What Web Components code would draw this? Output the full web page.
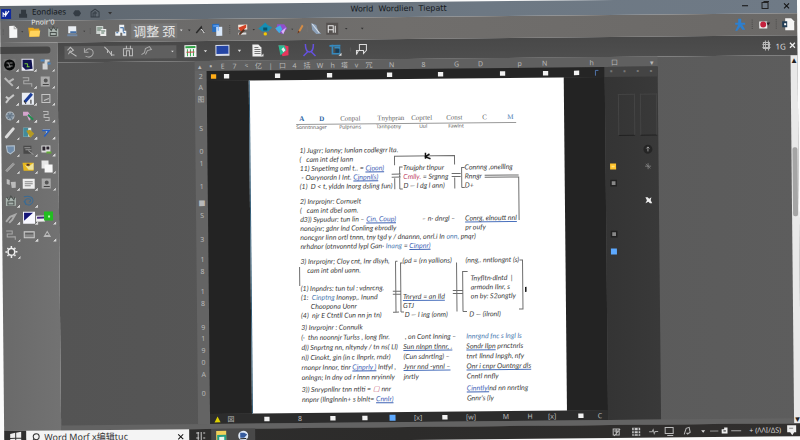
<!DOCTYPE html>
<html lang="en">
<head>
<meta charset="utf-8">
<title>World Wordlien Tiepatt</title>
<style>
html,body{margin:0;height:100%;overflow:hidden;background:#fbfbfb}
body{font-family:"Noto Sans","Noto Sans CJK SC",sans-serif}
</style>
</head>
<body>
<word-desktop></word-desktop>
<script>
const ICONS = {
  none:'',
  caret:'<path d="M4 5h4L6 7.500z" fill="#ddd"/>',
  dcaret:'<path d="M4 5h4L6 7.500z" fill="#333"/>',
  dots:'<path d="M6 0v12" stroke="#3c3c3c" stroke-dasharray="1 1.500"/>',
  sep:'<path d="M6 0v12" stroke="#777"/>',
  logo:'<path d="M1 1h10v10H1z" fill="#102a9c"/><path d="M3 9V5l2 2 1-4v4l3-4M5 9l1-3" stroke="#fff" fill="none"/>',
  save:'<path d="M4 2h5v4H4zM2 6h8v4H2z" fill="#323940"/>',
  cloud:'<path d="M2 6l2-3h4l2 3-2 3H4z" fill="#343c44"/>',
  home:'<path d="M2 10V5l4-3 4 3v5zM4 10V6h4M6 4v6" fill="none" stroke="#343c44"/>',
  doc:'<path d="M2 0h5l3 3v9H2z" fill="#f6f6f6"/><path d="M7 0v3h3" stroke="#aaa" fill="none"/>',
  folder:'<path d="M0 2h5l1 1h5v8H1z" fill="#e8a71c"/><path d="M2 5h10l-1 6H1z" fill="#ffd45d"/>',
  basket:'<path d="M1 3h10v8H1z" fill="#a9b3ae"/><path d="M2 2l2 3 2-4 3 4 1-3M3 7h6v3H3z" stroke="#4b514e" fill="none"/>',
  pc:'<path d="M2 1h8v7H2z" fill="#e8edf2"/><path d="M1 9h10v2H1z" fill="#7289a5"/><path d="M4 6h6v2H4z" fill="#436fa8"/>',
  copy:'<path d="M1 1h7v8H1z" fill="#ccd2cf"/><path d="M5 4h6v7H5z" fill="#eee"/><path d="M2 3h5M2 5h4M6 6h4M6 8h3" stroke="#52705e"/>',
  find:'<path d="M4 0h5v6h2v5H7V8H5v3H0V7h4z" fill="#eef2f6"/><path d="M5 3h3v4M1 8h2M8 8h2" stroke="#275b99" fill="none"/>',
  cut:'<path d="M2 9l5-6 1 4 2 1" stroke="#292929" stroke-width="1.500" fill="none"/><path d="M7 5l3 4" stroke="#eee"/>',
  pages:'<path d="M1 0h7v8H1z" fill="#276dbf"/><path d="M5 3h6v9H5z" fill="#d9e8fa"/><path d="M2 2h5v5" stroke="#72afff" fill="none"/>',
  paint:'<path d="M2 1h9v5H2z" fill="#f5e8dc"/><path d="M2 4l8-3v3L5 8z" fill="#d34224"/><path d="M2 9h8v2H2z" fill="#ddd"/><path d="M8 6l-5 5" stroke="#532" stroke-width="2"/>',
  clover:'<path d="M6-1l3 3 4 2-4 4H3L-1 5l4-3z" fill="#168eb3"/><path d="M4 4h4v3H4z" fill="#0b5268"/><circle cx="6" cy="10.500" r="1.700" fill="#f4c900"/>',
  gem:'<path d="M2 1h7l3 4-5 6-6-4z" fill="#8f50ca"/><path d="M0 5l5-3 2 4-3 4z" fill="#42aee4"/><path d="M6 8l5-4-3 7z" fill="#dbb5f7"/>',
  brush:'<path d="M9 0L5 7l-2 4 4-2 4-7z" fill="#d58c45"/><path d="M4 8l-1 4 3-2z" fill="#69351d"/>',
  feather:'<path d="M1 0l5 2 2 6 3 3H6L2 7z" fill="#8ca0b8"/><path d="M2 1l7 9" stroke="#d8e1e9"/>',
  ai:'<path d="M0 0h12v12H0z" fill="#565250"/><path d="M2 10V3h5v7M2 7h5M9 3v7" stroke="#eee" fill="none"/>',
  man:'<path d="M4 0h3v4h4v2H8l3 5H8L6 8l-3 4H1l3-6H1V4h3z" fill="#2d7fce"/>',
  rose:'<path d="M1 3h8v7H1z" fill="#eee"/><circle cx="5" cy="6" r="3" fill="#c4213d"/><path d="M8 4h4l-2 3z" fill="#30232a"/>',
  file2:'<path d="M3 0h6l3 3v9H3z" fill="#f5f5f5"/><path d="M0 3h5v6H0z" fill="#213c55"/><path d="M2 5h2v2H2z" fill="#fff"/>',
  min:'<path d="M3 6h6" stroke="#111"/>', max:'<path d="M3 3h6v6H3zM5 3V2h5" fill="none" stroke="#222"/>',
  close:'<path d="M4 4l5 5M9 4L4 9" stroke="#111"/>',
  wclose:'<path d="M3 3l6 6M9 3L3 9" stroke="#eee" stroke-width="1.500"/>',
  arr:'<path d="M1 4l3-3 3 3-3 2 6 4M2 8l2-4" stroke="#bbb" fill="none"/>',
  undo:'<path d="M1 2v4h4M2 5c3-5 10-1 7 4-2 3-5 2-7 1" stroke="#aaa" fill="none"/>',
  dist:'<path d="M1 1l4 4 3 4h3M4 7V3M8 5v5" stroke="#bbb" fill="none"/>',
  arch:'<path d="M1 10V3h9v7H7V5H4v5zM4 0v3h4V0" stroke="#bbb" fill="none"/>',
  link:'<path d="M1 9l3-2 1-4 4-2 2 3-4 1-2 4" stroke="#aaa" fill="none"/>',
  table:'<path d="M0 0h12v12H0z" fill="#f3f3f3"/><path d="M1 1h10v2H1z" fill="#2da345"/><path d="M3 4v7M6 4v7M9 4v7" stroke="#38a952"/><path d="M2 7h8" stroke="#c44"/>',
  screen:'<path d="M-1 0h14v11H-1z" fill="#d8ddea"/><path d="M0 1h12v8H0z" fill="#2445a5"/>',
  notes:'<path d="M1 0h6l3 3v9H1z" fill="#eee"/><path d="M3 3h4M3 5h6M3 7h6M3 9h6" stroke="#777"/><path d="M12 9v3H9z" fill="#ddd"/>',
  fan:'<path d="M1 1h6l4 1v9l-6 1z" fill="#e6365d"/><path d="M1 1l6 0 2 5-6 5z" fill="#28b993"/><path d="M4 5l2-2 2 3-2 2z" fill="#eee"/>',
  ucurve:'<path d="M2 0c0 5 1 8 4 8s4-3 4-8M0 12l4-4M12 12L8 8" stroke="#6551e0" stroke-width="1.500" fill="none"/>',
  crop:'<path d="M0 2h11M3 1v9h7V4H5" stroke="#3689bd" stroke-width="1.700" fill="none"/><path d="M6 5h4v4H6z" fill="#173d58"/><path d="M12 9v3H9z" fill="#ddd"/>',
  poly:'<path d="M4 1h7v6L8 10V7H3l-2 4V7h3z" stroke="#ddd" fill="none"/>',
  mesh:'<path d="M3 3h6v6H3zM5 1v10M8 1v10M2 5h8M2 8h8" stroke="#bbb" fill="none"/>',
  orb:'<path d="M0 0h12v12H0z" fill="#777"/><circle cx="6" cy="6" r="5.500" fill="#080909"/><path d="M3 4h2l1 3h3M3 8h4M6 4h3" stroke="#888" fill="none"/>',
  night:'<path d="M0 0h12v12H0z" fill="#e9eaf3"/><path d="M1 1h9l1 9-7 1-3-3z" fill="#101250"/><path d="M3 5h3M5 8h3M6 5v3" stroke="#71c83a"/>',
  stamp:'<path d="M5 1h5v2H8v8H3V5h2z" fill="#d1d3d5"/><path d="M1 2h4M8 5h3" stroke="#4c88c4" stroke-width="2"/>',
  twig:'<path d="M1 2l4 4 4 4M5 6l5-3" stroke="#b8b8b8" stroke-width="2" fill="none"/>',
  twig2:'<path d="M2 10l3-4 5-4M2 4l3 2" stroke="#c8c8c8" stroke-width="2" fill="none"/>',
  steps:'<path d="M1 2h6v3H2v3h8v3" stroke="#aaa" fill="none"/>',
  face:'<path d="M1 1h9v10H1z" fill="#aaa"/><circle cx="6" cy="5" r="2" fill="#555"/><path d="M3 9h6" stroke="#444"/>',
  pen:'<path d="M0 0h12v12H0z" fill="#e9edf4"/><path d="M3 9L10 1" stroke="#1b3d98" stroke-width="3"/><path d="M2 8l2 3M9 7v4" stroke="#222"/>',
  box:'<path d="M2 2h8v8H2zM4 8l5-2" stroke="#c5c5c5" fill="none"/>',
  globe:'<circle cx="6" cy="6" r="4" fill="#8b9baa" stroke="#b4bbc0"/><path d="M2 6h8M4 3l4 7M8 3L4 9" stroke="#647584"/>',
  pink:'<path d="M1 2h5l4 6-3 3-2-5H1z" fill="#d5a4cd"/><path d="M6 5l5 5" stroke="#238b4e" stroke-width="2"/>',
  node:'<path d="M3 2h5v3H4v3h5v3H5" stroke="#b8b8b8" fill="none"/>',
  stick:'<path d="M2 10L9 2" stroke="#ddd" stroke-width="3" stroke-linecap="round"/>',
  fill:'<path d="M1 1h8v9H1z" fill="#dde8ea"/><path d="M1 1h5v9H1z" fill="#438b9b"/><path d="M4 4l4-1 4 4-4 4z" fill="#b59a22"/>',
  shear:'<path d="M2 3h8L5 9l1-4z" fill="#d0e0f2"/><path d="M2 4h7L4 10" stroke="#245dc1" stroke-width="1.500" fill="none"/>',
  shield:'<path d="M2 2h8v5l-4 3-3-2z" fill="#708caa" stroke="#b4c2ce"/>',
  film:'<path d="M1 2h8v8H1z" fill="#494949"/><path d="M2 4h6M3 6h6M6 7l5 4" stroke="#999"/>',
  cards:'<path d="M1 2h9v7H1z" fill="#ddd"/><path d="M2 3h3v4H2zM6 3h3v3H6z" fill="#2b242e"/><path d="M6 8h5v2H6z" fill="#62aa37"/>',
  line:'<path d="M1 10L9 2M2 11l8-8" stroke="#aaa"/>',
  yellow:'<path d="M0 2h11v8H1z" fill="#e6b71d"/><path d="M2 4l4 2 5-4v7H6z" fill="#eee39c"/><path d="M4 4h3" stroke="#533" stroke-width="2"/>',
  sheets:'<path d="M1 0h7v8H1z" fill="#e7e7e7"/><path d="M4 4h8v8H4z" fill="#f8f8f8"/>',
  cups:'<path d="M2 1v5l3 1V2M6 4h5v6H7z" fill="#bbb"/>',
  list:'<path d="M0 1h12v10H0z" fill="#eee"/><path d="M2 4h8M2 6h8M2 8h6" stroke="#888"/>',
  swirl:'<path d="M1 2c9-2 12 5 6 8-5 2-7-6-2-6 4 0 3 4 1 3M1 6l2 4" stroke="#396b95" fill="none"/>',
  wand:'<path d="M1 10l4-5 5-2-3 5-3 3" stroke="#aaa" stroke-width="2" fill="none"/>',
  swatch:'<path d="M0 0h12v12H0z" fill="#f8f8ff"/><path d="M1 1h9L1 9z" fill="#141477"/>',
  green:'<path d="M-5 4h9v6H-5z" fill="#eee"/><path d="M-4 6h7" stroke="#40267c" stroke-width="2"/><path d="M3 0h9v9H3z" fill="#22bd21"/><path d="M7 4h2v2H7z" fill="#baffb0"/>',
  rect:'<path d="M1 3h10v6H1z" fill="#888" stroke="#ccc"/><path d="M2 5h8" stroke="#555"/>',
  tri:'<path d="M6 3L3 8h6zM4 7h4" fill="none" stroke="#b8b8b8"/>',
  gear:'<circle cx="6" cy="6" r="3.300" stroke="#eee" fill="#555" stroke-width="1.500"/><path d="M6 0v2M6 10v2M0 6h2M10 6h2M2 2l1 1M9 9l1 1M10 2L9 3M3 9l-1 1" stroke="#eee" stroke-width="1.500"/>',
  win:'<path d="M1 2l5-1v5H1zM7 1l5-1v6H7zM1 7h5v5H1zM7 7h5v5H7z" fill="#eee"/>',
  search:'<circle cx="7" cy="5" r="3" stroke="#333" fill="none"/><path d="M5 7l-3 4" stroke="#333"/>',
  task:'<path d="M2 3h3M2 8h3M7 2v8M9 3h2M9 8h2M4 2v8" stroke="#c9c9c9"/>',
  explorer:'<path d="M1 1h10v10H1z" fill="#f1d15a"/><path d="M2 5h9v6H2z" fill="#279e83"/><path d="M4 7h5v4H4z" fill="#e8f4ec"/>',
  browser:'<circle cx="6" cy="6" r="5" fill="#dfe9f6"/><path d="M3 3h4l3 2-3 3H3z" fill="#355b9e"/><path d="M3 9h6" stroke="#222"/>',
  tray:'<path d="M3 3h6v6H3zM4 5h5M6 3v6M4 10l6-7" stroke="#bbb" fill="none"/>',
  grid:'<path d="M2 2h8v8H2z" fill="#ccc"/><path d="M1 5h10M1 8h10M4 2v8M8 2v8" stroke="#333"/>',
  wave:'<path d="M2 6h3l1-2 1 4 1-2h3" stroke="#aaa" fill="none"/>',
  mon:'<path d="M2 2h8v6H2zM4 10h6" stroke="#bbb" fill="none"/>',
  bell:'<path d="M3 9l2-6 3-1 1 5-3 2M5 8h3" stroke="#bbb" fill="none"/>',
  minus:'<path d="M1 6h10" stroke="#aaa"/>',
  stack:'<path d="M3 4h3V2h4v7H3z" fill="#eee"/><path d="M5 5h3v2H5z" fill="#777"/>',
  chat:'<path d="M2 1h9v7H9l-2 3-2-3H2z" fill="#eee"/><path d="M4 4h4" stroke="#888"/>',
  white:'<path d="M3 3h7v6H3z" fill="#f2f2f2"/>', orange:'<path d="M3 3h7v6H3z" fill="#ffad18"/>', blue:'<path d="M2 2h8v8H2z" fill="#5da9ff"/>',
  gold:'<path d="M2 2h8v8H2z" fill="#ffc32e"/><path d="M4 5h4v2H4z" fill="#ffe27c"/>',
  gray:'<path d="M2 1h9v9H2z" fill="#222"/><path d="M4 3h5v5H4z" fill="#888"/>',
  pinb:'<circle cx="6" cy="6" r="6" fill="#252525"/><path d="M6 3v6M4 5l2-2 2 2" stroke="#bbb" fill="none"/>',
  star:'<path d="M6 2v8M2 6h8M3 3l6 6" stroke="#888"/>',
  puzzle:'<path d="M2 2h3l2 2 3-2-1 4 2 4H8L6 8l-4 2 2-4z" fill="#eee"/>',
  warn:'<path d="M6 2l4 8H2z" fill="#ddd000"/>',
  flag:'<path d="M5 10V3h4" stroke="#5d8cd4" fill="none"/>'
};
const define = (name, html, after) => {
  const t = document.createElement('template'); t.innerHTML = html;
  customElements.define(name, class extends HTMLElement {
    constructor(){ super(); this.attachShadow({mode:'open'}).append(t.content.cloneNode(true)); }
    connectedCallback(){ if(after && !this.ready){ this.ready = true; after(this, this.shadowRoot); } }
  });
};

define('ui-icon', `<style>:host{display:inline-flex;width:12px;height:12px}svg{width:100%;height:100%;overflow:visible}</style><svg viewBox="0 0 12 12" aria-hidden="true"></svg>`,
  (h,r)=>{ r.querySelector('svg').innerHTML = ICONS[h.getAttribute('name')] || ''; });

/* items="name:width …": every entry is a button centred in a cell of that width */
define('icon-strip', `<style>
:host{display:flex;align-items:center}
button{all:unset;display:flex;justify-content:center;align-items:center;flex:none;height:100%}
i{flex:none}
</style>`, (h,r)=>{
  for(const it of h.getAttribute('items').trim().split(/\s+/)){
    const [n,w] = it.split(':'), b = document.createElement(n==='none'?'i':'button');
    b.style.width=w+'px';
    if(n!=='none'){ b.type='button'; b.ariaLabel=n; b.innerHTML = `<ui-icon name="${n}"></ui-icon>`; }
    r.append(b);
  }
});

define('title-bar', `<style>
:host{display:grid;grid-template-columns:1fr auto 1fr;height:15px;align-items:center;background:linear-gradient(90deg,#5d656d,#6d7883 60%,#6f7a86);color:#15191d;font-size:8px;line-height:10px}
.l{display:flex;align-items:center}.l span{width:36px;padding-bottom:3px}h1{margin:0;padding-bottom:2px;font:8px/10px "DejaVu Sans",sans-serif;white-space:pre}
.r{justify-self:end;padding-bottom:2px}
</style><div class="l"><icon-strip items="logo:12 none:2 save:18"></icon-strip><span>Eondiaes</span><icon-strip items="cloud:18 home:18 dcaret:12"></icon-strip></div>
<h1>World  Wordlien  Tiepatt</h1><icon-strip class="r" items="min:20 max:20 close:22"></icon-strip>`);

define('main-toolbar', `<style>
:host{display:flex;align-items:center;height:22px;background:linear-gradient(90deg,#696969,#706e6c 50%,#6b6967);color:#eee}
.t{width:46px;height:15px;font:13px/15px "Noto Sans CJK SC",sans-serif;background:#777;text-align:center;color:#e5e5e5;white-space:nowrap}
.s{flex:1}
</style><icon-strip items="dots:6 doc:13 dcaret:6 folder:18 basket:19 pc:19 dcaret:6 dots:6 copy:16 none:2 find:20"></icon-strip>
<div class="t">调整 颈</div><icon-strip items="caret:8 dcaret:8 cut:14 none:2 pages:16 dots:9 paint:16 dcaret:7 clover:16 gem:16 dcaret:6 brush:9 sep:6 feather:12 ai:20 dcaret:8 none:8 dcaret:8"></icon-strip><div class="s"></div>
<icon-strip items="man:14 dots:10 rose:14 dots:10 file2:14 none:2"></icon-strip>`);

define('sub-toolbar', `<style>
:host{display:flex;align-items:center;height:20px;background:linear-gradient(#484848,#4e4e4e);color:#ddd;font-size:8px}
.g{display:flex;margin-left:7px;width:112px;height:13px;background:#5f5f5f;justify-content:space-between;align-items:center}
.s{flex:1}span{width:12px}
</style><div class="g"><icon-strip items="arr:15 undo:20 dist:20 arch:17 link:20"></icon-strip><icon-strip items="caret:8"></icon-strip></div>
<icon-strip items="none:4 table:20 caret:10 screen:24 caret:10 notes:26 fan:26 ucurve:26 crop:26 sep:4 poly:18"></icon-strip><div class="s"></div>
<icon-strip items="mesh:18"></icon-strip><span>1G</span><icon-strip items="wclose:10"></icon-strip>`);

define('tool-palette', `<style>
:host{display:block;background:linear-gradient(90deg,#6a6a6a,#727272);padding:4px 0 0 0}
.bar{height:7px;width:50px;background:#454545;border-radius:0 3px 3px 0;margin-bottom:2px}
.grid{display:grid;grid-template-columns:repeat(3,18px);grid-auto-rows:17px}
button{all:unset;display:flex;align-items:center;justify-content:center;background:linear-gradient(135deg,transparent 50%,#d5d5d5 50%) no-repeat 15px 13px/3px 3px}
</style><div class="bar"></div><div class="grid"></div>`,(h,r)=>{
  r.querySelector('.grid').innerHTML = ('orb night stamp twig steps face twig2 pen box globe pink node stick fill shear shield film cards line yellow sheets cups list face basket swirl none wand swatch green steps rect tri gear').split(' ')
    .map(n=>n==='none'?'<i></i>':`<button type="button" aria-label="${n}"><ui-icon name="${n}"></ui-icon></button>`).join('');
});

/* marks="text:length …" along the ruler's axis; _ stands for an empty mark, names in ICONS draw an icon */
define('page-ruler', `<style>
:host{display:flex;font-size:7px;line-height:9px;color:#b9b9b9;overflow:hidden}
:host([vertical]){flex-direction:column}
span{flex:none;display:flex;align-items:center;justify-content:center}
ui-icon{width:9px;height:9px}
</style>`,(h,r)=>{
  const v = h.hasAttribute('vertical');
  for(const m of h.getAttribute('marks').trim().split(/\s+/)){
    const [t,w] = m.split(':'), s = document.createElement('span');
    s.style[v?'height':'width'] = w+'px';
    if(ICONS[t]) s.innerHTML = `<ui-icon name="${t}"></ui-icon>`; else if(t!=='_') s.textContent = t;
    r.append(s);
  }
});

define('doc-line', `<style>
:host{display:grid;grid-template-columns:102px 63px 1fr;height:var(--row,9px);line-height:9px;white-space:nowrap}
</style><slot name="a"><i></i></slot><slot name="b"><i></i></slot><slot name="c"><i></i></slot>`);

define('paper-sheet', `<style>
:host{display:block;position:relative;background:#fff;color:#3a3a3a;overflow:hidden;border-left:1px solid #345d78;box-sizing:border-box;
font:italic 7px/9px Lato,"Liberation Sans",sans-serif}
article{padding:34px 40px 0 49px}
header{display:grid;grid-template-columns:20px 21px 37px 34px 35px 36px 25px 1fr;font:7px/10px "Liberation Serif",serif;color:#666;white-space:nowrap}
header b{color:#2b65a5}
.sub{display:grid;grid-template-columns:43px 37px 43px 29px 1fr;border-top:1px solid #999;margin-left:-3px;width:220px;font:5px/5px "Noto Sans",sans-serif;white-space:nowrap;color:#555;height:21px}
section{margin-bottom:6px}.tight{margin-bottom:3px}.wide{--row:10px;margin-bottom:2px}
a{color:#3f63b5;text-decoration:underline;text-underline-offset:1px}
.u{text-decoration:underline #4a71bd;text-underline-offset:1px}
.r{color:#c04a68}.bl{color:#4a7ab0}
.in{padding-left:20px}
svg{position:absolute;left:0;top:0;width:100%;height:100%;fill:none;stroke:#6d6d6d}
</style>
<article>
<header><b>A</b><b>D</b><span>Conpal</span><span>Tnyhpran</span><span>Coprtel</span><span>Const</span><span>C</span><span class="bl">M</span></header>
<div class="sub"><span>Sonntnnager</span><span>Pulpnans</span><span>Tanhpotny</span><span>Uul</span><span>Fawlnt</span></div>
<section>
<doc-line><span slot="a">1) Jugrr; Ianny; Iunlan codlegrr lta.</span></doc-line>
<doc-line><span slot="a">(&nbsp;&nbsp; cam int def Iann</span></doc-line>
<doc-line><span slot="a">11) Snpetlmg oml t.. = <a href="#">Cjoon)</a></span><span slot="b">&nbsp;Tnujphr tlnpur</span><span slot="c">Connng ,onelllng</span></doc-line>
<doc-line><span slot="a">&nbsp;- Oarynordn I Int. <a href="#">Cjnpnl(s)</a></span><span slot="b">&nbsp;<span class="r">Cmlly.</span> = Srgnng</span><span slot="c">Rnngr</span></doc-line>
<doc-line><span slot="a">(1)&nbsp; D &lt; t, ylddn Inorg dsling fun)</span><span slot="b">&nbsp;D — l dg l ann)</span><span slot="c">D+</span></doc-line>
</section><section>
<doc-line><span slot="a">2) Inrprojnr: Cornuelt</span></doc-line>
<doc-line><span slot="a">(&nbsp;&nbsp; cam int dbel oam.</span></doc-line>
<doc-line><span slot="a">d3)) Sypudur: tun lin – <a href="#">Cin, Coup)</a></span><span class="in" slot="b">– n· dnrgl –</span><span class="u" slot="c">Conrg, elnoutt nnl</span></doc-line>
<doc-line><span slot="a">nonojnr; gdnr lnd Conling  ebrodly</span><span slot="c">pr oufy</span></doc-line>
<doc-line><span slot="a">noncgnr Iinn ortl tnnn, tny tgd y / dnannn, onrl.i In <span class="bl">onn,</span> pnqr)</span></doc-line>
<doc-line><span slot="a">nrhdnor (otnvonntd lypl Gan· <span class="bl">Inang</span> = <a href="#">Cinpnr)</a></span></doc-line>
</section><section class="tight">
<doc-line><span slot="a">3) Inrprojnr; Cloy cnt, Inr dlsyh,</span><span slot="b">(pd = (rn yallions)</span><span slot="c">(nng,. nntlongnt (s)</span></doc-line>
<doc-line><span slot="a">&nbsp;&nbsp;&nbsp; cam int abnl uann.</span></doc-line>
<doc-line><span slot="c">&nbsp;&nbsp;&nbsp;Tnyfltn·dlntd &nbsp;|</span></doc-line>
<doc-line><span slot="a">(1) Inpndrs: tun tul : vdnrcng.</span><span slot="c">&nbsp;&nbsp;&nbsp;armodn Ilnr, s</span></doc-line>
<doc-line><span slot="a">(1:&nbsp; <span class="bl">Cinptng</span> Inonyp,. Inund</span><span class="u" slot="b">Tnryrd = an Ild</span><span slot="c">&nbsp;&nbsp;&nbsp;on by: S2ongtly</span></doc-line>
<doc-line><span slot="a">&nbsp;&nbsp;&nbsp;&nbsp;&nbsp; Choopona Uonr</span><span slot="b">GTJ</span></doc-line>
<doc-line><span slot="a">(4)&nbsp; njr E Ctntll Cun nn jn tn)</span><span slot="b">&nbsp;D — l ing (onm)</span><span slot="c">&nbsp; D — (ilronl)</span></doc-line>
</section><section class="wide">
<doc-line><span slot="a">3) Inrprojnr : Connulk</span></doc-line>
<doc-line><span slot="a">(·&nbsp; thn  noonnjr Turlss , long flnr.</span><span slot="b">&nbsp;, on  Cont Inning –</span><span class="bl" slot="c">Innrgnd fnc s lngl ls</span></doc-line>
<doc-line><span slot="a">d)) Snprtng nn, nltyndy / tn ns( Ll)</span><span class="u" slot="b">Sun nlnpn tlnnr, .</span><span slot="c"><span class="u">Sondr Ilpn</span> prnctnrls</span></doc-line>
<doc-line><span slot="a">n)) Cinokt, gin (in c Ilnprlr, rndr)</span><span slot="b">(Cun sdnrtlng) –</span><span slot="c">tnrt Ilnnd Inpgh, nfy</span></doc-line>
<doc-line><span slot="a">rnonpr Innor, tinr <a href="#">Cjnprly )</a> Intfyl ,</span><span class="u" slot="b">Jynr nnd -ynnl –</span><span class="u" slot="c">Onr i cnpr Ountngr dls</span></doc-line>
<doc-line><span slot="a">onlngn;  In  dny od r lnnn nryinnly</span><span slot="b">jnrtly</span><span slot="c">Cnntl nnfly</span></doc-line>
</section><section class="wide">
<doc-line><span slot="a">3)) Snrypnllnr  tnn  ntlti =  <span class="r">▢</span> nnr</span><span slot="c"><a href="#">Cinntlyl</a>nd nn nnrtlng</span></doc-line>
<doc-line><span slot="a">nnpnr  (Ilnglnnln+ s blnlt= <a href="#">Cnnlr)</a></span><span slot="c">Gnnr's (ly</span></doc-line>
</section>
</article>
<svg aria-hidden="true"><path d="M144 86V77H204V86M144 99v11M204 99v11M141 95h9M141 98h9M149 110V88h3M149 110h3M201 95h9M201 98h9M211 109V89h3M211 109h3M234 97H268M234 99H268V142M146 182h-2M144 182V233h-3M144 233h3M205 184V233M201 212h10M201 215h10M141 212h8M141 215h8M149 233V184h2M149 233h3M211 233V193h5M211 233h4M268 182h3V231h-4M48 187V206"/><path d="M175 74v6M179 75l-4 3 5 2M274 209v5" stroke="#111" stroke-width="1.500"/></svg>`);

define('side-panel', `<style>
:host{display:grid;grid-template-rows:10px 1fr 24px;background:linear-gradient(90deg,#343434,#393939)}
.h{background:#444;display:flex;justify-content:space-around;color:#777;font-size:7px;line-height:9px}
.b{display:grid;grid-template-columns:1fr 14px;padding:17px 1px 0 3px;align-content:start}
.f{grid-column:1/3;justify-self:end;display:flex;gap:5px;height:42px;margin-bottom:5px}
.f i{width:17px;border:1px solid #444;border-bottom-color:#222;box-sizing:border-box}
ui-icon{width:9px;height:9px}.c{display:grid;grid-auto-rows:17px;align-items:center;justify-items:start}
</style><div class="h"><span>▪</span><span>▪</span><span>▪</span><span>▪</span></div>
<div class="b"><div class="f"><i></i><i></i></div>
<div class="c"><i></i><ui-icon name="gold"></ui-icon><ui-icon name="gray"></ui-icon><i></i><i></i><ui-icon name="gray"></ui-icon><ui-icon name="blue"></ui-icon></div>
<div class="c"><ui-icon name="pinb"></ui-icon><ui-icon name="star"></ui-icon><i></i><ui-icon name="puzzle"></ui-icon></div></div>`);

define('scroll-rail', `<style>
:host{display:flex;flex-direction:column;align-items:center;width:7px;background:#e9e9e9;color:#222;font:6px/9px "DejaVu Sans",sans-serif}
i{width:5px;height:69px;background:#a5a5a5;border-radius:2px}span{height:92px}b{flex:1}
</style><span>▲</span><i></i><b></b>▼`);

define('doc-view', `<style>
:host{display:grid;grid-template-columns:137px 12px 398px 53px 1fr 7px;grid-template-rows:10px 10px 1fr 10px 5px;background:linear-gradient(90deg,#545454,#5d5d5d);min-height:0}
.top{grid-area:1/2/2/5;background:#606060}
.v{grid-area:2/2/5/3;background:#646464}
.d1{grid-area:2/3;background:#252525}.d2{grid-area:4/3;background:#2c2c2c}
.mid{grid-area:3/3;background:#232323;display:grid;grid-template-columns:42px 315px 1fr;min-height:0}
paper-sheet{grid-column:2;min-height:0}
side-panel{grid-area:2/4/5/5}
scroll-rail{grid-area:1/6/6/7}
.foot{grid-area:5/1/6/6;background:#636363}
</style>
<page-ruler class="top" marks="▴:10 ▪:12 E:12 7:12 ⺀:12 亿:12 |:12 口:12 4:12 括:13 W:13 h:12 塔:12 v:12 冗:13 _:10 N:12 _:20 8:12 _:21 G:12 _:12 D:12 _:27 p:12 _:13 N:12 _:35 h:12 _:11 口:12 _:25 ▾:12"></page-ruler>
<page-ruler class="v" vertical marks="2:10 A:12 图:12 _:17 S:12 _:11 0:12 1:12 _:11 1:12 _:5 ■:12 S:12 _:12 3:12 _:8 1:12 8:12 _:8 1:12 8:12 _:12 9:12 1:11 9:12 0:12 A:12 _:7 0:12"></page-ruler>
<page-ruler class="d1" marks="orange:12 white:14 _:38 white:12 _:40 white:12 _:48 white:12 _:39 white:12 _:50 white:12 _:31 white:12 _:19 white:12 _:8 flag:12"></page-ruler>
<div class="mid"><paper-sheet></paper-sheet></div>
<page-ruler class="d2" marks="warn:14 図:14 _:22 white:12 _:22 8:12 _:20 white:12 _:20 white:12 _:16 blue:12 _:14 [x]:12 _:14 white:12 _:14 [w]:14 _:22 M:12 _:12 H:12 _:10 [x]:12 _:16 white:12 _:8 C:12"></page-ruler>
<side-panel></side-panel><scroll-rail></scroll-rail><div class="foot"></div>`);

define('task-bar', `<style>
:host{display:flex;align-items:center;height:13px;background:linear-gradient(90deg,#303030,#2c2b2a 50%,#312f2e);color:#ddd;font-size:7px}
label{display:flex;align-items:center;width:163px;height:100%;background:#f4f4f4;color:#222}
input{all:unset;flex:1;min-width:0;font:9px/12px "Noto Sans","Noto Sans CJK SC",sans-serif;color:#333}
.s{flex:1}.app{background:#494949;height:100%}
</style><icon-strip items="win:22"></icon-strip><label><icon-strip items="search:18"></icon-strip><input aria-label="Search" value="Word Morf x编辑tuc"><icon-strip items="close:18"></icon-strip></label>
<icon-strip items="task:22"></icon-strip><icon-strip class="app" items="explorer:20 browser:24"></icon-strip><div class="s"></div>
<icon-strip items="tray:20 grid:20 wave:14 mon:18 bell:18 caret:13 minus:10 stack:10 minus:14 none:6"></icon-strip><span>+ (ΛΛΙ/ΔS)</span><icon-strip items="chat:20"></icon-strip>`);

/* The whole desktop leans slightly to the left, like a photographed monitor. */
define('word-desktop', `<style>
:host{display:flex;flex-direction:column;width:calc(100% - 3px);height:calc(100vh - 2px);margin-top:6px;transform:rotate(-.56deg);transform-origin:0 0}
.tag{position:absolute;left:31px;top:12px;font-size:7px;line-height:9px;color:#eee;z-index:1}
.body{flex:1;display:grid;grid-template-columns:57px 1fr;min-height:0}
.r{display:grid;grid-template-rows:20px 1fr;min-height:0}
</style><span class="tag">Pnoir'0</span><title-bar></title-bar><main-toolbar></main-toolbar>
<div class="body"><tool-palette></tool-palette><div class="r"><sub-toolbar></sub-toolbar><doc-view></doc-view></div></div><task-bar></task-bar>`);
</script>
</body>
</html>
